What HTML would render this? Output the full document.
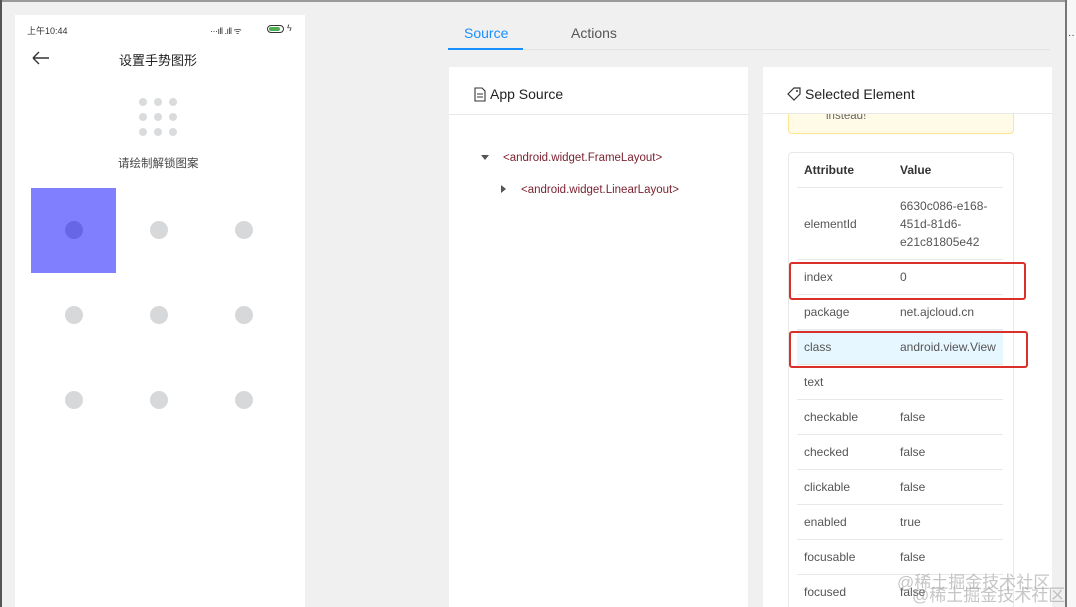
<!DOCTYPE html>
<html><head><meta charset="utf-8"><style>
*{box-sizing:border-box;margin:0;padding:0}
html,body{width:1076px;height:607px;overflow:hidden}
body{background:#f0f0f0;font-family:"Liberation Sans","Noto Sans CJK SC",sans-serif;position:relative;color:#333}
.a{position:absolute}
.row{position:absolute;left:797px;width:206px;border-bottom:1px solid #e8e8e8;font-size:12px;color:#555}
.row span{position:absolute;top:50%;transform:translateY(-50%)}
.row .k{left:7px}.row .v{left:103px;line-height:18px}
.dot{position:absolute;width:18px;height:18px;border-radius:50%;background:#d6d8da}
</style></head><body>
<div class="a" style="left:0;top:0;width:1076px;height:2px;background:#9a9a9a"></div>
<div class="a" style="left:0;top:0;width:2px;height:607px;background:#555"></div>
<div class="a" style="left:1065px;top:0;width:2px;height:607px;background:#777"></div>
<div class="a" style="left:1067px;top:0;width:9px;height:607px;background:#f7f7f7"></div>
<div class="a" style="left:1068px;top:30px;font-size:10px;color:#333">··</div>

<!-- phone -->
<div class="a" style="left:15px;top:15px;width:290px;height:592px;background:#fff"></div>
<div class="a" style="left:27px;top:24px;font-size:9px;color:#333">上午10:44</div>
<div class="a" style="left:210px;top:24px;font-size:9px;color:#333;letter-spacing:-0.5px">···ıll .ıll ᯤ</div>
<div class="a" style="left:267px;top:25px;width:17px;height:8px;border:1px solid #333;border-radius:4px"><div style="margin:1px;width:11px;height:4px;background:#4caf50;border-radius:2px"></div></div>
<div class="a" style="left:287px;top:23px;font-size:9px">ϟ</div>
<svg class="a" style="left:32px;top:51px" width="18" height="14"><path d="M1 7H17M1 7L7 1M1 7L7 13" stroke="#333" stroke-width="1.4" fill="none"/></svg>
<div class="a" style="left:119px;top:50px;font-size:13px;color:#222">设置手势图形</div>
<svg class="a" style="left:136px;top:95px" width="44" height="44">
<g fill="#d9dbdd"><circle cx="7" cy="7" r="4"/><circle cx="22" cy="7" r="4"/><circle cx="37" cy="7" r="4"/><circle cx="7" cy="22" r="4"/><circle cx="22" cy="22" r="4"/><circle cx="37" cy="22" r="4"/><circle cx="7" cy="37" r="4"/><circle cx="22" cy="37" r="4"/><circle cx="37" cy="37" r="4"/></g></svg>
<div class="a" style="left:118px;top:155px;font-size:11.5px;color:#444">请绘制解锁图案</div>
<div class="a" style="left:31px;top:188px;width:85px;height:85px;background:#8080ff"></div>
<div class="dot" style="left:65px;top:221px;background:#6666e6"></div>
<div class="dot" style="left:150px;top:221px"></div><div class="dot" style="left:235px;top:221px"></div>
<div class="dot" style="left:65px;top:306px"></div><div class="dot" style="left:150px;top:306px"></div><div class="dot" style="left:235px;top:306px"></div>
<div class="dot" style="left:65px;top:391px"></div><div class="dot" style="left:150px;top:391px"></div><div class="dot" style="left:235px;top:391px"></div>

<!-- tabs -->
<div class="a" style="left:448px;top:49px;width:602px;height:1px;background:#e2e2e2"></div>
<div class="a" style="left:464px;top:25px;font-size:14px;color:#1890ff">Source</div>
<div class="a" style="left:571px;top:25px;font-size:14px;color:#555">Actions</div>
<div class="a" style="left:448px;top:48px;width:75px;height:2px;background:#1890ff"></div>

<!-- left card -->
<div class="a" style="left:449px;top:67px;width:299px;height:540px;background:#fff"></div>
<div class="a" style="left:449px;top:114px;width:299px;height:1px;background:#e8e8e8"></div>
<svg class="a" style="left:474px;top:87px" width="12" height="15"><path d="M1 1H8L11 4V14H1Z M3 7H9M3 10H9" stroke="#333" stroke-width="1.1" fill="none"/></svg>
<div class="a" style="left:490px;top:86px;font-size:14px;color:#222">App Source</div>
<svg class="a" style="left:481px;top:155px" width="8" height="6"><path d="M0 0H8L4 5Z" fill="#555"/></svg>
<div class="a" style="left:503px;top:152px;font-size:11.5px;color:#7a1f2e">&lt;android.widget.FrameLayout&gt;</div>
<svg class="a" style="left:501px;top:185px" width="6" height="8"><path d="M0 0V8L5 4Z" fill="#555"/></svg>
<div class="a" style="left:521px;top:184px;font-size:11.5px;color:#7a1f2e">&lt;android.widget.LinearLayout&gt;</div>

<!-- right card -->
<div class="a" style="left:763px;top:67px;width:289px;height:540px;background:#fff"></div>
<div class="a" style="left:788px;top:100px;width:226px;height:34px;background:#fffbe6;border:1px solid #ffe58f;border-radius:4px"></div>
<div class="a" style="left:826px;top:110px;font-size:11.5px;color:#666">instead!</div>
<div class="a" style="left:763px;top:67px;width:289px;height:47px;background:#fff;border-bottom:1px solid #e8e8e8"></div>
<svg class="a" style="left:787px;top:87px" width="15" height="14"><path d="M1 7L7 1H13V7L7 13Z" stroke="#333" stroke-width="1.2" fill="none"/><circle cx="10" cy="4" r="1" fill="#333"/></svg>
<div class="a" style="left:805px;top:86px;font-size:14px;color:#222">Selected Element</div>

<div class="a" style="left:788px;top:152px;width:226px;height:470px;border:1px solid #e8e8e8;border-radius:4px"></div>
<div class="row" style="top:152px;height:36px;font-weight:bold;color:#333"><span class="k">Attribute</span><span class="v">Value</span></div>
<div class="row" style="top:188px;height:72px"><span class="k">elementId</span><span class="v">6630c086-e168-<br>451d-81d6-<br>e21c81805e42</span></div>
<div class="row" style="top:260px;height:35px"><span class="k">index</span><span class="v">0</span></div>
<div class="row" style="top:295px;height:35px"><span class="k">package</span><span class="v">net.ajcloud.cn</span></div>
<div class="row" style="top:330px;height:35px;background:#e6f7ff"><span class="k">class</span><span class="v">android.view.View</span></div>
<div class="row" style="top:365px;height:35px"><span class="k">text</span></div>
<div class="row" style="top:400px;height:35px"><span class="k">checkable</span><span class="v">false</span></div>
<div class="row" style="top:435px;height:35px"><span class="k">checked</span><span class="v">false</span></div>
<div class="row" style="top:470px;height:35px"><span class="k">clickable</span><span class="v">false</span></div>
<div class="row" style="top:505px;height:35px"><span class="k">enabled</span><span class="v">true</span></div>
<div class="row" style="top:540px;height:35px"><span class="k">focusable</span><span class="v">false</span></div>
<div class="row" style="top:575px;height:35px"><span class="k">focused</span><span class="v">false</span></div>

<div class="a" style="left:789px;top:262px;width:237px;height:38px;border:2.5px solid #d9302a;border-radius:3px"></div>
<div class="a" style="left:789px;top:331px;width:239px;height:37px;border:2.5px solid #d9302a;border-radius:3px"></div>

<div class="a" style="left:897px;top:568px;font-size:17px;color:rgba(150,150,150,0.55)">@稀土掘金技术社区</div>
<div class="a" style="left:912px;top:581px;font-size:17px;color:rgba(150,150,150,0.55)">@稀土掘金技术社区</div>
</body></html>
